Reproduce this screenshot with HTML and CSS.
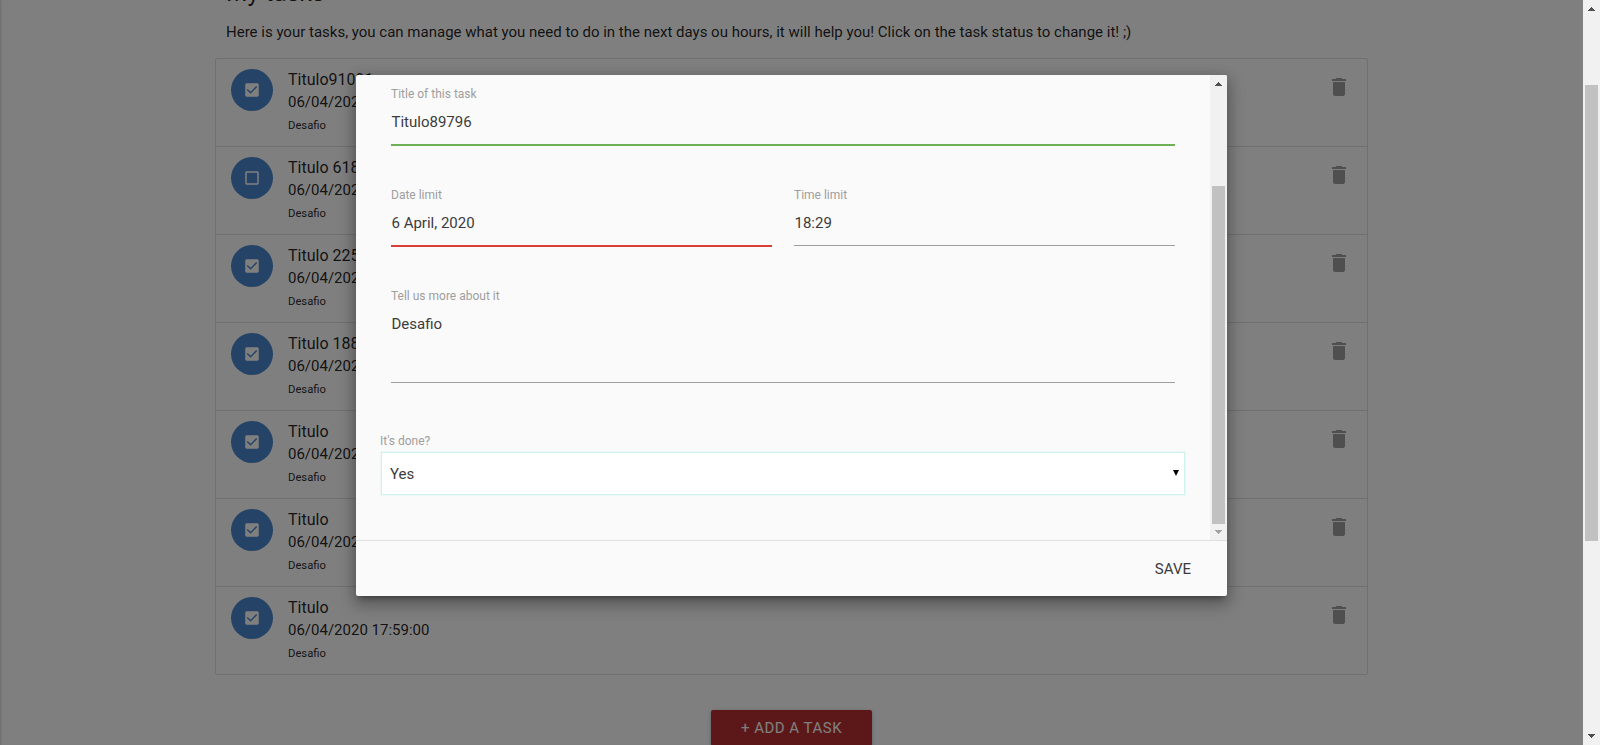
FILE: index.html
```html
<!DOCTYPE html>
<html lang="en">
<head>
<meta charset="utf-8">
<title>My tasks</title>
<link rel="stylesheet" href="styles.css">
</head>
<body>
<svg class="sprite" aria-hidden="true">
  <symbol id="on" viewBox="0 0 24 24"><path d="M19 3H5c-1.110 0-2 .9-2 2v14c0 1.100.89 2 2 2h14c1.110 0 2-.9 2-2V5c0-1.100-.89-2-2-2zm-9 14l-5-5 1.410-1.410L10 14.170l7.590-7.590L19 8l-9 9z"/></symbol>
  <symbol id="off" viewBox="0 0 24 24"><path d="M19 5v14H5V5h14m0-2H5c-1.100 0-2 .9-2 2v14c0 1.100.9 2 2 2h14c1.100 0 2-.9 2-2V5c0-1.100-.9-2-2-2z"/></symbol>
  <symbol id="bin" viewBox="0 0 24 24"><path d="M6 19c0 1.100.9 2 2 2h8c1.100 0 2-.9 2-2V7H6v12zM19 4h-3.500l-1-1h-5l-1 1H5v2h14V4z"/></symbol>
</svg>
<div class="window">
  <main class="page">
    <h5 class="heading">My tasks</h5>
    <p class="intro">Here is your tasks, you can manage what you need to do in the next days ou hours, it will help you! Click on the task status to change it! ;)</p>
    <ul class="tasks">
      <li class="task"><span class="status"><svg><use href="#on"/></svg></span><div class="info"><span class="name">Titulo91091</span><span class="date">06/04/2020</span><span class="desc">Desafio</span></div><svg class="bin"><use href="#bin"/></svg></li>
      <li class="task"><span class="status"><svg><use href="#off"/></svg></span><div class="info"><span class="name">Titulo 618</span><span class="date">06/04/2020</span><span class="desc">Desafio</span></div><svg class="bin"><use href="#bin"/></svg></li>
      <li class="task"><span class="status"><svg><use href="#on"/></svg></span><div class="info"><span class="name">Titulo 225</span><span class="date">06/04/2020</span><span class="desc">Desafio</span></div><svg class="bin"><use href="#bin"/></svg></li>
      <li class="task"><span class="status"><svg><use href="#on"/></svg></span><div class="info"><span class="name">Titulo 188</span><span class="date">06/04/2020</span><span class="desc">Desafio</span></div><svg class="bin"><use href="#bin"/></svg></li>
      <li class="task"><span class="status"><svg><use href="#on"/></svg></span><div class="info"><span class="name">Titulo</span><span class="date">06/04/2020</span><span class="desc">Desafio</span></div><svg class="bin"><use href="#bin"/></svg></li>
      <li class="task"><span class="status"><svg><use href="#on"/></svg></span><div class="info"><span class="name">Titulo</span><span class="date">06/04/2020</span><span class="desc">Desafio</span></div><svg class="bin"><use href="#bin"/></svg></li>
      <li class="task"><span class="status"><svg><use href="#on"/></svg></span><div class="info"><span class="name">Titulo</span><span class="date">06/04/2020 17:59:00</span><span class="desc">Desafio</span></div><svg class="bin"><use href="#bin"/></svg></li>
    </ul>
    <div class="add">+ ADD A TASK</div>
    <div class="overlay">
      <section class="modal">
        <div class="body">
          <form class="form">
            <div class="field"><label>Title of this task</label><div class="value valid">Titulo89796</div></div>
            <div class="pair">
              <div class="field"><label>Date limit</label><div class="value invalid">6 April, 2020</div></div>
              <div class="field"><label>Time limit</label><div class="value">18:29</div></div>
            </div>
            <div class="field more"><label>Tell us more about it</label><div class="value">Desafio</div></div>
            <div class="done"><label>It's done?</label><div class="select"><span>Yes</span><svg class="caret" viewBox="0 0 6 6"><path d="M0 0h6L3 6z"/></svg></div></div>
          </form>
          <div class="scrollbar">
            <svg class="arrow" viewBox="0 0 7 4" shape-rendering="crispEdges"><path d="M3 0h1v1h1v1h1v1h1v1H0V3h1V2h1V1h1z"/></svg>
            <div class="thumb"></div>
            <svg class="arrow dim" viewBox="0 0 7 4" shape-rendering="crispEdges"><path d="M0 0h7v1H6v1H5v1H4v1H3V3H2V2H1V1H0z"/></svg>
          </div>
        </div>
        <footer class="footer"><span>SAVE</span></footer>
      </section>
    </div>
  </main>
  <div class="scrollbar main">
    <svg class="arrow" viewBox="0 0 7 4" shape-rendering="crispEdges"><path d="M3 0h1v1h1v1h1v1h1v1H0V3h1V2h1V1h1z"/></svg>
    <div class="thumb"></div>
    <svg class="arrow" viewBox="0 0 7 4" shape-rendering="crispEdges"><path d="M0 0h7v1H6v1H5v1H4v1H3V3H2V2H1V1H0z"/></svg>
  </div>
</div>
</body>
</html>
```
FILE: styles.css
```css
* { box-sizing: border-box; }
body { margin: 0; font: 400 15px/22px Roboto, sans-serif; color: rgba(0,0,0,.87); overflow: hidden; }
.sprite { display: none; }
.window { display: flex; height: 745px; overflow: hidden; }
.page { position: relative; flex: 1; overflow: hidden; background: #fff; padding: 0 215px; box-shadow: inset 2px 0 2px -1px rgba(0,0,0,.15); }
.heading { margin: -21px 11px 0; font-size: 24.6px; line-height: 27px; font-weight: 400; height: 27px; }
.intro { margin: 15px 11px 15px; line-height: 22px; white-space: nowrap; }
.tasks { list-style: none; margin: 0; padding: 0; border: 1px solid #e0e0e0; border-radius: 2px; width: 1153px; }
.task { display: flex; height: 88px; padding: 10px 16px 0 15px; border-bottom: 1px solid #e0e0e0; }
.task:last-child { border-bottom: 0; height: 87px; }
.status { width: 42px; height: 42px; border-radius: 50%; background: #4a86cc; display: flex; align-items: center; justify-content: center; }
.status svg { width: 18px; height: 18px; fill: #fff; }
.info { flex: 1; margin-left: 15px; display: flex; flex-direction: column; white-space: nowrap; }
.name { font-size: 16px; line-height: 22px; }
.date { line-height: 22px; }
.desc { font-size: 11.25px; line-height: 26px; }
.bin { width: 24px; height: 24px; margin-top: 6px; fill: #9e9e9e; }
.add { margin: 35px auto 0; width: 161px; height: 36px; line-height: 36px; text-align: center; background: #b93030; color: #fff; border-radius: 2px; letter-spacing: .5px; box-shadow: 0 2px 2px rgba(0,0,0,.14), 0 3px 1px -2px rgba(0,0,0,.12), 0 1px 5px rgba(0,0,0,.2); }
.overlay { position: absolute; inset: 0; background: rgba(0,0,0,.5); display: flex; justify-content: center; align-items: flex-start; padding-top: 75px; }
.modal { width: 871px; height: 521px; background: #fafafa; color: #3c3c3c; border-radius: 2px; overflow: hidden; display: flex; flex-direction: column; box-shadow: 0 8px 17px 2px rgba(0,0,0,.22), 0 3px 14px 2px rgba(0,0,0,.14), 0 5px 5px -3px rgba(0,0,0,.3); }
.body { display: flex; height: 465px; }
.form { flex: 1; padding: 9px 24px 0; }
.field { flex: 1; height: 101px; margin: 0 11px; }
label { display: block; height: 20px; font-size: 12px; line-height: 20px; color: #9e9e9e; }
.value { height: 41px; line-height: 36px; border-bottom: 1px solid #9e9e9e; text-indent: .5px; }
.valid { height: 42px; border-bottom: 2px solid #6db056; }
.invalid { height: 42px; border-bottom: 2px solid #d93f36; }
.pair { display: flex; }
.more { height: 145px; }
.more .value { height: 77px; }
.select { margin-top: 0; height: 45px; background: #fff; border: 1px solid #f0f6f5; box-shadow: 0 0 0 1px #cdf3ec inset; display: flex; justify-content: space-between; align-items: center; padding: 0 6px 0 9px; }
.caret { width: 6px; height: 6px; margin-bottom: 1px; }
.scrollbar { width: 17px; background: #f1f1f1; display: flex; flex-direction: column; align-items: center; padding: 7px 0 6px; }
.arrow { width: 7px; height: 4px; fill: #505050; }
.arrow.dim { fill: #a3a3a3; }
.thumb { width: 13px; height: 338px; background: #c1c1c1; margin: 100px 0 6px; }
.main .thumb { height: 456px; margin: 74px 0 193px; }
.footer { flex: 1; border-top: 1px solid #e0e0e0; display: flex; justify-content: flex-end; align-items: center; padding-right: 36px; }
```
